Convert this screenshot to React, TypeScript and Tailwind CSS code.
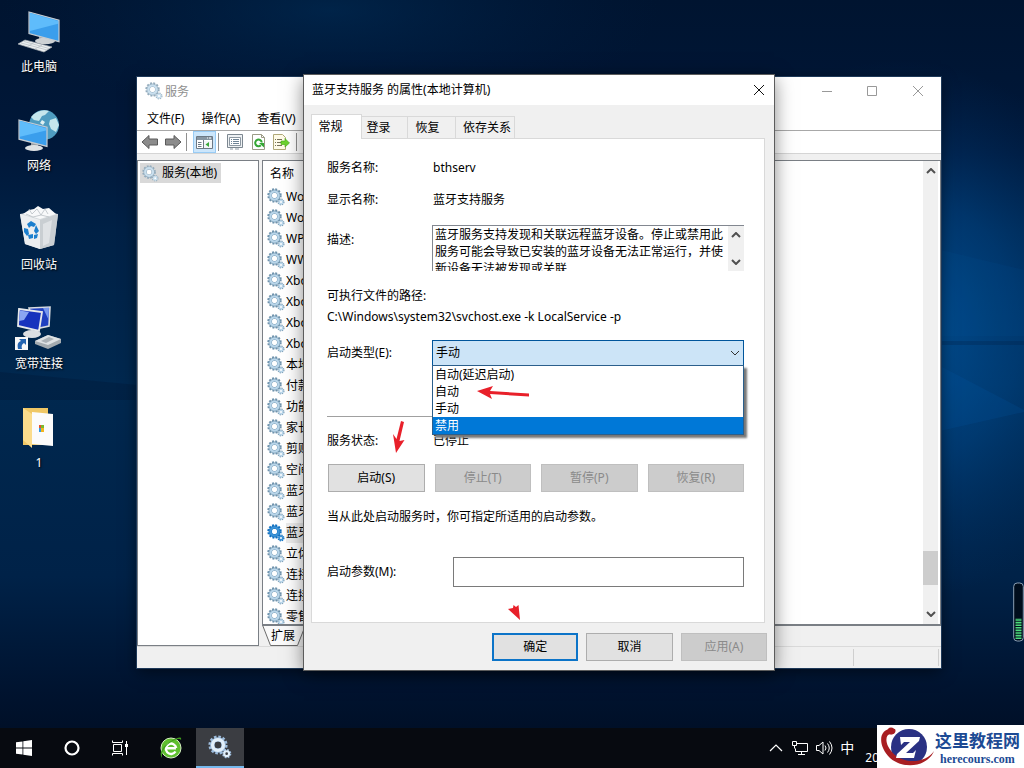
import type { ReactNode } from "react";

const services = [
    "Wo", "Wo", "WP", "WW", "Xbo", "Xbo", "Xbo", "Xbo", "本地", "付款", "功能",
    "家长", "剪贴", "空间", "蓝牙", "蓝牙", "蓝牙", "立体", "连接", "连接", "零售",
];
const selectedService = 16;

const startupTypes = ["自动(延迟启动)", "自动", "手动", "禁用"];

const description =
    "蓝牙服务支持发现和关联远程蓝牙设备。停止或禁用此服务可能会导致已安装的蓝牙设备无法正常运行，并使新设备无法被发现或关联";

function Gears({ size = 18, rim = "#6f93ad", body = "#b9d6ea", hole = "#ffffff" }) {
    return (
        <svg width={size} height={size} viewBox="0 0 18 18" className="shrink-0" aria-hidden="true">
            <circle cx="7.5" cy="7.5" r="6.2" fill="none" stroke={rim} strokeWidth="2" strokeDasharray="1.9 1.35" />
            <circle cx="7.5" cy="7.5" r="4.2" fill="none" stroke={rim} strokeWidth="3.4" />
            <circle cx="7.5" cy="7.5" r="4.1" fill="none" stroke={body} strokeWidth="2.4" />
            <circle cx="7.5" cy="7.5" r="2.4" fill={hole} />
            <circle cx="14" cy="14" r="2.8" fill="none" stroke={rim} strokeWidth="1.4" strokeDasharray="1.3 0.9" />
            <circle cx="14" cy="14" r="1.8" fill={hole} stroke={body} strokeWidth="1.6" />
        </svg>
    );
}

function Chevron({ up = false, color = "#505050", width = 2 }) {
    return (
        <svg width="10" height="6" viewBox="0 0 10 6" fill="none" stroke={color} strokeWidth={width} aria-hidden="true">
            <path d={up ? "M1 5 5 1l4 4" : "M1 1l4 4 4-4"} />
        </svg>
    );
}

function Wallpaper() {
    return (
        <svg className="absolute inset-0 h-full w-full" viewBox="0 0 1024 768" preserveAspectRatio="none" aria-hidden="true">
            <defs>
                <linearGradient id="sky" x1="0" y1="0" x2="0" y2="1">
                    <stop offset="0" stopColor="#001430" />
                    <stop offset="0.2" stopColor="#00183a" />
                    <stop offset="0.3" stopColor="#002146" />
                    <stop offset="0.5" stopColor="#00284f" />
                    <stop offset="0.75" stopColor="#002248" />
                    <stop offset="0.9" stopColor="#00132f" />
                    <stop offset="1" stopColor="#000c20" />
                </linearGradient>
                <radialGradient id="glow">
                    <stop offset="0" stopColor="#0060b0" stopOpacity="0.75" />
                    <stop offset="0.5" stopColor="#00509a" stopOpacity="0.45" />
                    <stop offset="1" stopColor="#003a78" stopOpacity="0" />
                </radialGradient>
                <radialGradient id="top">
                    <stop offset="0" stopColor="#003a6c" stopOpacity="0.4" />
                    <stop offset="1" stopColor="#00244c" stopOpacity="0" />
                </radialGradient>
            </defs>
            <rect width="1024" height="768" fill="url(#sky)" />
            <ellipse cx="330" cy="10" rx="330" ry="110" fill="url(#top)" />
            <ellipse cx="900" cy="330" rx="240" ry="270" fill="url(#glow)" />
            <path d="M900 240 1024 270V336H900z" fill="#0064b8" opacity="0.08" />
            <path d="M900 345 1024 410V412L900 440z" fill="#0064b8" opacity="0.14" />
            <path d="M900 341H1024V345H900z" fill="#001c40" opacity="0.25" />
            <path d="M0 372 137 385V400H0z" fill="#001a3a" opacity="0.4" />
        </svg>
    );
}

function Screen({ x, y, w, h }: { x: number; y: number; w: number; h: number }) {
    return (
        <g>
            <path d={`M${x} ${y}l${w} ${h * 0.3}v${h * 0.8}l${-w} ${-h * 0.3}z`} fill="#3a9eec" stroke="#c6cbd0" strokeWidth="1.2" />
            <path d={`M${x + 1} ${y + 1}l${w - 2} ${h * 0.3}v${h * 0.1}L${x + 1} ${y + h * 0.7}z`} fill="#5fbcfb" />
        </g>
    );
}

function PcIcon() {
    return (
        <svg width="48" height="48" viewBox="0 0 48 48" aria-hidden="true">
            <path d="M24 28h7v4h-7z" fill="#9aa0a5" />
            <ellipse cx="30" cy="33" rx="10" ry="3.200" fill="#cdd1d4" />
            <Screen x={14} y={4} w={30} h={27} />
            <path d="M3 36l7-4 27 7-8 5z" fill="#eceff1" stroke="#aab0b5" strokeWidth="0.7" />
            <path d="M6 35l26 7M9 33.500l25 7M12 39l7-4.500M20 41l7-4" stroke="#b5bbc0" strokeWidth="0.7" />
        </svg>
    );
}

function NetworkIcon() {
    return (
        <svg width="48" height="48" viewBox="0 0 48 48" aria-hidden="true">
            <circle cx="29" cy="18" r="15" fill="#4e9cc0" />
            <path d="M16 10c5-6 12-8 18-6l-4 4-3 1-3 5-5-1zM35 13l6-2 3 7-3 7-5-3-2-5z" fill="#c5e6ec" />
            <path d="M27 13l3 2-2 3-3-2z" fill="#e0f2f3" />
            <path d="M16 36h7v5h-7z" fill="#9aa0a5" />
            <ellipse cx="19" cy="41" rx="9" ry="3" fill="#dfe2e4" />
            <Screen x={4} y={13} w={28} h={24} />
        </svg>
    );
}

function BinIcon() {
    return (
        <svg width="48" height="48" viewBox="0 0 48 48" aria-hidden="true">
            <path d="M5 8l19-3 19 3-4 31-14 4-15-5z" fill="#d5dadd" />
            <path d="M5 8l20 6v29l-15-5z" fill="#eceef0" />
            <path d="M25 14l18-6-4 31-14 4z" fill="#c9ced2" />
            <path d="M8 8l6-4 5-1 4-3 5 3 6-1 7 6-16 5z" fill="#f8f9fa" />
            <path d="M14 3l3 5 5-5 4 6 4-6 3 5M11 8l7 3 8-2 8 2" fill="none" stroke="#b9bfc4" strokeWidth="0.8" />
            <path d="M28 18l9-4-3 23-6 3z" fill="#dfe2e5" />
            <path d="M12 18l4-3 5 3-2 3-3-1-2 2zM21 19l3 6-3 3-2-3zM9 22l4 1 1 5-2 2-3-4zM13 29l5-1v4l-4 1zM19 29l4-1-1 4-3 1z" fill="#1c7fce" />
        </svg>
    );
}

function BroadbandIcon() {
    return (
        <svg width="48" height="48" viewBox="0 0 48 48" aria-hidden="true">
            <path d="M14 3l21-1-1 19-14 3z" fill="#1f3fc0" stroke="#d9dcdf" strokeWidth="1.6" />
            <path d="M28 3l6-.5-.5 12z" fill="#7898ee" />
            <ellipse cx="17" cy="29" rx="9" ry="4" fill="#dcdfe2" />
            <path d="M4 4l23 3-3 19L3 21z" fill="#1732bd" stroke="#e6e8ea" strokeWidth="1.8" />
            <path d="M5 5.500l9 1.500-5 8-5 1z" fill="#8ba5f2" />
            <path d="M20 36l13-6 13 4v4l-13 6-13-5z" fill="#a4abb0" />
            <path d="M20 36l13-6 13 4-13 6z" fill="#dfe2e4" />
            <path d="M26 36l8-4 5 2-8 4z" fill="#abb1b6" />
            <rect x="0" y="32" width="13" height="13" fill="#f8f8f8" />
            <path d="M3 44c-1-5 0-7 3-8l-2-2h7v6l-2-2c-2 1-3 3-2 6z" fill="#2464b0" />
        </svg>
    );
}

function FolderIcon() {
    return (
        <svg width="48" height="48" viewBox="0 0 48 48" aria-hidden="true">
            <path d="M8 4h25v37H8z" fill="#efc765" />
            <path d="M17 8l21 2v32l-21-2z" fill="#fbfbfb" />
            <path d="M8 4l9 6v34l-9-8z" fill="#fbdc8c" />
            <path d="M24 21h2v3h-2z" fill="#e8502c" />
            <path d="M26 21h3v3h-3z" fill="#7ab82e" />
            <path d="M24 24h2v4h-2z" fill="#2e9be6" />
            <path d="M26 24h3v4h-3z" fill="#f3b51c" />
        </svg>
    );
}

const shortcuts = [
    { name: "此电脑", icon: <PcIcon /> },
    { name: "网络", icon: <NetworkIcon /> },
    { name: "回收站", icon: <BinIcon /> },
    { name: "宽带连接", icon: <BroadbandIcon /> },
    { name: "1", icon: <FolderIcon /> },
];

function Shortcuts() {
    return (
        <div className="relative flex w-[78px] flex-col gap-[30px] pt-2">
            {shortcuts.map((s) => (
                <button key={s.name} className="flex flex-col items-center gap-px text-xs leading-5 text-white [text-shadow:1px_1px_2px_#000]">
                    {s.icon}
                    <span>{s.name}</span>
                </button>
            ))}
        </div>
    );
}

function ToolArrow({ flip = false }) {
    return (
        <svg width="18" height="16" viewBox="0 0 18 16" aria-hidden="true">
            <path
                d={flip ? "M17 8 10 1.500V5H1.500v6H10v3.500z" : "M1 8l7-6.500V5h8.500v6H8v3.500z"}
                fill="#8c8c8c"
                stroke="#5a5a5a"
            />
        </svg>
    );
}

function Toolbar() {
    return (
        <div className="flex h-6 items-center border-t border-b border-t-[#a8a8a8] border-b-[#d5d5d5] bg-white pl-1">
            <button aria-label="后退"><ToolArrow /></button>
            <button aria-label="前进" className="ml-[5px]"><ToolArrow flip /></button>
            <span className="ml-1 h-[18px] w-px bg-[#8f8f8f]" />
            <button aria-label="显示控制台树" className="ml-[6px] flex h-[22px] w-[23px] items-center justify-center border border-[#99ccf5] bg-[#cce6fb]">
                <svg width="17" height="15" viewBox="0 0 17 15" aria-hidden="true">
                    <path d="M.5 1.500h16v12H.5z" fill="#fff" stroke="#6c7884" />
                    <path d="M1 2h15v3H1z" fill="#8796a3" />
                    <path d="M11 3h1m1 0h2" stroke="#fff" />
                    <path d="M7.500 5v8.500M2 7.500h3.500M2 9.500h3.500M2 11.500h3.500" stroke="#6c7884" />
                    <path d="M8 6h8v7H8z" fill="#f2f5f7" />
                    <path d="M13 7v5L9.500 9.500z" fill="#3aa83a" />
                </svg>
            </button>
            <span className="ml-[2px] h-[18px] w-px bg-[#8f8f8f]" />
            <button aria-label="属性" className="ml-2">
                <svg width="16" height="16" viewBox="0 0 16 16" fill="none" aria-hidden="true">
                    <path d="M.5.5h15v13H.5z" fill="#eef1f3" stroke="#7c8790" />
                    <path d="M2.500 3.500h11v8h-11z" fill="#fff" stroke="#8d98a1" />
                    <path d="M4 5.500h1m1 0h6M4 7.500h1m1 0h6M4 9.500h1m1 0h6" stroke="#6f8496" />
                    <path d="M3 15h3m2 0h4" stroke="#8d98a1" />
                </svg>
            </button>
            <button aria-label="刷新" className="ml-2">
                <svg width="15" height="16" viewBox="0 0 15 16" fill="none" aria-hidden="true">
                    <path d="M1.500.5h9l3 3v12h-12z" fill="#fff" stroke="#9b9b86" />
                    <path d="M10.500.5v3h3" stroke="#9b9b86" />
                    <path d="M10.800 8.500a3.300 3.300 0 1 0-1 2.800" stroke="#35a735" strokeWidth="2" />
                    <path d="M8 9h5v4.500z" fill="#35a735" />
                </svg>
            </button>
            <button aria-label="导出列表" className="ml-[7px]">
                <svg width="17" height="16" viewBox="0 0 17 16" fill="none" aria-hidden="true">
                    <path d="M.5.5h9l3 3v12H.5z" fill="#fffbe8" stroke="#b0a878" />
                    <path d="M2 5.500h1m1 0h5M2 8.500h1m1 0h5M2 11.500h1m1 0h5" stroke="#77715a" />
                    <path d="M8 7h4V4.500L16.500 9 12 13v-2.500H8z" fill="#6cd32f" stroke="#43a516" strokeWidth=".6" />
                </svg>
            </button>
            <span className="ml-[6px] h-[18px] w-px bg-[#8f8f8f]" />
        </div>
    );
}

function ServicesWindow() {
    return (
        <section className="absolute top-[77px] left-[137px] w-[804px] bg-[#f0f0f0] shadow-[0_0_0_1px_#1d3858,0_4px_14px_rgba(0,0,0,0.5)]">
            <header className="flex h-7 items-center bg-white pl-2 text-[#8f8f8f]">
                <Gears rim="#94acbd" body="#c9dfee" />
                <h2 className="ml-[2px] flex-1 pt-[2px]">服务</h2>
                <div className="flex text-[#999]">
                    <button aria-label="最小化" className="flex w-[45px] justify-center">
                        <svg width="12" height="12" viewBox="0 0 12 12" stroke="currentColor"><path d="M1 6.500h10" /></svg>
                    </button>
                    <button aria-label="最大化" className="flex w-[45px] justify-center">
                        <svg width="12" height="12" viewBox="0 0 12 12" fill="none" stroke="currentColor"><path d="M1.500 1.500h9v9h-9z" /></svg>
                    </button>
                    <button aria-label="关闭" className="flex w-[47px] justify-center">
                        <svg width="12" height="12" viewBox="0 0 12 12" stroke="currentColor"><path d="M1 1l10 10M11 1 1 11" /></svg>
                    </button>
                </div>
            </header>
            <nav className="flex h-[25px] items-center gap-[17px] bg-white pt-[2px] pl-[10px]">
                <button>文件(F)</button>
                <button>操作(A)</button>
                <button>查看(V)</button>
            </nav>
            <Toolbar />
            <div className="flex gap-[3px] pt-[6px]">
                <div className="w-[122px] border border-[#7a7f85] bg-white pt-[2px] pl-[2px]">
                    <button className="flex h-5 items-center gap-[3px] bg-[#d9d9d9] pr-1 pl-[2px]">
                        <Gears size={17} rim="#94acbd" body="#c9dfee" />
                        服务(本地)
                    </button>
                </div>
                <div className="min-w-0 flex-1">
                    <div className="flex h-[466px] overflow-hidden border border-b-2 border-[#7a7f85] bg-white">
                        <div className="flex-1 overflow-hidden">
                            <table className="w-[280px] text-left">
                                <thead>
                                    <tr className="h-[25px]">
                                        <th className="pl-[7px] font-normal">名称</th>
                                    </tr>
                                </thead>
                                <tbody>
                                    {services.map((name, i) => (
                                        <tr key={i} className="h-[21px]">
                                            <td className="p-0">
                                                <div className="flex items-center gap-px pl-1">
                                                    {i === selectedService ? (
                                                        <Gears rim="#0f6fc0" body="#3d93d6" />
                                                    ) : (
                                                        <Gears />
                                                    )}
                                                    <span className={i === selectedService ? "flex-1 bg-[#ececec] leading-5" : "leading-5"}>{name}</span>
                                                </div>
                                            </td>
                                        </tr>
                                    ))}
                                </tbody>
                            </table>
                        </div>
                        <div className="mr-[2px] flex w-[15px] flex-col items-center justify-between bg-[#f0f0f0] py-[7px]">
                            <Chevron up />
                            <div className="mt-auto mb-[26px] h-[34px] w-full bg-[#cdcdcd]" />
                            <Chevron />
                        </div>
                    </div>
                    <button className="relative flex h-5 w-[46px] items-center pl-[9px]">
                        <svg className="absolute inset-0" width="46" height="20" viewBox="0 0 46 20" fill="#fafafa" stroke="#6b6b6b" aria-hidden="true">
                            <path d="M.5-1l8 20.500h27L42 3V-1z" />
                        </svg>
                        <span className="relative">扩展</span>
                    </button>
                </div>
            </div>
            <footer className="flex h-[22px] justify-end border-t border-[#dadada]">
                <span className="my-[2px] w-[86px] border-x border-[#cfcfcf]" />
                <span className="w-[2px]" />
            </footer>
        </section>
    );
}

function DialogButton({ children, disabled = false, primary = false }: { children: ReactNode; disabled?: boolean; primary?: boolean }) {
    const look = disabled
        ? "border border-[#bfbfbf] bg-[#cccccc] text-[#8a8a8a]"
        : primary
          ? "border-2 border-[#0c74c8] bg-[#e1e1e1]"
          : "border border-[#adadad] bg-[#e1e1e1]";
    return (
        <button disabled={disabled} className={`h-7 w-full ${look}`}>
            {children}
        </button>
    );
}

function RedArrows() {
    return (
        <svg className="pointer-events-none absolute top-0 left-0" width="470" height="595" viewBox="304 75 470 595" fill="#e8202a" aria-hidden="true">
            <path d="M477 391l16-5-3 5 39 2.500v3L490 394l2 5z" />
            <path d="M401 421l3 1-4.500 19 5-1L396 453l-3-19 3.500 5z" />
            <path d="M508 609l5-1 .5-3 2.500 2 2.500-2 1.500 15z" />
        </svg>
    );
}

function PropertiesDialog() {
    const rowLabel = "w-[106px] shrink-0";
    const sideTab = "h-[22px] border border-l-0 border-b-0 border-[#d9d9d9] bg-[#f0f0f0]";
    return (
        <section
            role="dialog"
            aria-label="蓝牙支持服务 的属性(本地计算机)"
            className="absolute top-[75px] left-[304px] w-[470px] bg-[#f0f0f0] pb-[9px] shadow-[0_0_0_1px_#5c5c5c,0_4px_18px_rgba(0,0,0,0.5)]"
        >
            <header className="flex h-[30px] items-center justify-between bg-white pr-[9px] pl-2">
                <h2>蓝牙支持服务 的属性(本地计算机)</h2>
                <button aria-label="关闭">
                    <svg width="12" height="12" viewBox="0 0 12 12" stroke="#111"><path d="M1 1l10 10M11 1 1 11" /></svg>
                </button>
            </header>

            <div className="flex items-end pt-[9px] pl-[7px]" role="tablist">
                <button role="tab" aria-selected="true" className="relative -mb-px h-[25px] w-[51px] border border-b-0 border-[#d9d9d9] bg-white pr-3">常规</button>
                <button role="tab" className={`${sideTab} w-[46px] pr-3`}>登录</button>
                <button role="tab" className={`${sideTab} w-12 pr-2`}>恢复</button>
                <button role="tab" className={`${sideTab} w-[59px] pl-1`}>依存关系</button>
            </div>

            <div className="mr-[9px] ml-[7px] border border-[#d9d9d9] bg-white pt-[13px] pr-5 pb-[35px] pl-[15px]">
                <div className="flex h-8 items-center">
                    <span className={rowLabel}>服务名称:</span>
                    <span>bthserv</span>
                </div>
                <div className="flex h-8 items-center">
                    <span className={rowLabel}>显示名称:</span>
                    <span>蓝牙支持服务</span>
                </div>
                <div className="mt-[9px] flex">
                    <label htmlFor="desc" className="w-[105px] shrink-0 leading-[30px]">描述:</label>
                    <div className="flex h-[46px] min-w-0 flex-1 border-t border-l border-[#828790]">
                        <textarea id="desc" readOnly value={description} className="min-w-0 flex-1 resize-none overflow-hidden pl-[2px] leading-[17px] outline-none" />
                        <div className="flex w-4 flex-col items-center justify-between bg-[#f0f0f0] py-[6px]">
                            <Chevron up />
                            <Chevron />
                        </div>
                    </div>
                </div>

                <p className="mt-[15px] leading-5">可执行文件的路径:</p>
                <p className="leading-[22px]">C:\Windows\system32\svchost.exe -k LocalService -p</p>

                <div className="mt-3 flex items-center">
                    <label htmlFor="type" className="w-[105px] shrink-0">启动类型(E):</label>
                    <div className="relative min-w-0 flex-1">
                        <select id="type" defaultValue="手动" className="block h-[26px] w-full appearance-none border border-[#00559b] bg-[#cce4f7] pl-[3px] outline-none">
                            <option>手动</option>
                        </select>
                        <span className="pointer-events-none absolute top-[10px] right-1">
                            <Chevron width={1} color="#333" />
                        </span>
                        <ul role="listbox" className="absolute top-[25px] left-0 w-full border border-[#2b5f8c] bg-white shadow-[3px_3px_2px_#777]">
                            {startupTypes.map((t) => (
                                <li key={t} role="option" aria-selected={t === "禁用"} className={t === "禁用" ? "bg-[#0078d7] pl-[2px] leading-[17px] text-white" : "pl-[2px] leading-[17px]"}>
                                    {t}
                                </li>
                            ))}
                        </ul>
                    </div>
                </div>

                <hr className="mt-[50px] border-[#a0a0a0]" />

                <div className="mt-[14px] flex h-5 items-center">
                    <span className={rowLabel}>服务状态:</span>
                    <span>已停止</span>
                </div>

                <div className="mt-[13px] ml-px grid grid-cols-4 gap-[10px]">
                    <DialogButton>启动(S)</DialogButton>
                    <DialogButton disabled>停止(T)</DialogButton>
                    <DialogButton disabled>暂停(P)</DialogButton>
                    <DialogButton disabled>恢复(R)</DialogButton>
                </div>

                <p className="mt-[15px] leading-5">当从此处启动服务时，你可指定所适用的启动参数。</p>

                <div className="mt-[30px] flex items-center">
                    <label htmlFor="args" className="w-[126px] shrink-0">启动参数(M):</label>
                    <input id="args" type="text" className="h-[30px] min-w-0 flex-1 border border-[#7a7a7a] bg-white px-1 outline-none" />
                </div>
            </div>

            <footer className="mt-[10px] mr-[7px] ml-auto grid w-[275px] grid-cols-3 gap-2">
                <DialogButton primary>确定</DialogButton>
                <DialogButton>取消</DialogButton>
                <DialogButton disabled>应用(A)</DialogButton>
            </footer>
            <RedArrows />
        </section>
    );
}

function Meter() {
    return (
        <svg className="absolute right-0 bottom-[86px]" width="11" height="60" viewBox="0 0 11 60" aria-hidden="true">
            <rect x=".7" y="1" width="9.600" height="58" rx="3.500" fill="#000d1c" stroke="#8ba0b4" />
            <path d="M5.500 57V36" stroke="#4ddb7c" strokeWidth="6" strokeDasharray="1.600 1" />
        </svg>
    );
}

function Taskbar() {
    return (
        <footer className="relative flex h-10 items-center bg-[#070a10] text-white">
            <button aria-label="开始" className="flex w-12 justify-center">
                <svg width="16" height="16" viewBox="0 0 16 16" fill="#fff"><path d="M0 2.300 6.500 1.400v6.200H0zM7.300 1.300 16 0v7.600H7.300zM0 8.400h6.500v6.200L0 13.700zM7.300 8.400H16V16l-8.700-1.300z" /></svg>
            </button>
            <button aria-label="搜索" className="flex w-12 justify-center">
                <svg width="16" height="16" viewBox="0 0 16 16" fill="none" stroke="#fff" strokeWidth="2.200"><circle cx="8" cy="8" r="6.500" /></svg>
            </button>
            <button aria-label="任务视图" className="flex w-12 justify-center">
                <svg width="18" height="16" viewBox="0 0 18 16" fill="none" stroke="#fff">
                    <path d="M1.500.5v2h10v-2M2.500 4.500h8v7h-8zM1.500 15.500v-2h10v2M15.500 1v14" />
                    <path d="M14 4h3v3h-3z" fill="#fff" stroke="none" />
                </svg>
            </button>
            <button aria-label="浏览器" className="ml-[2px] flex w-[50px] justify-center">
                <svg width="24" height="24" viewBox="0 0 24 24" fill="none">
                    <circle cx="12" cy="12" r="10" fill="#5fbf2e" stroke="#d6f0c2" />
                    <path d="M7 12.200h10M16.500 15.500A5.200 5.200 0 1 1 17.200 12" stroke="#fff" strokeWidth="2.400" />
                    <path d="M3 22c-4-5 2-13 9-17s11-5 10-1c-1-2-5-1-10 2S2 16 3 22z" fill="#3f9d1d" />
                </svg>
            </button>
            <button aria-label="服务" className="flex h-10 w-12 items-center justify-center border-b-2 border-[#76b9ed] bg-[#3b3d42]">
                <Gears size={24} rim="#9dbcdc" body="#e2effa" hole="#3b3d42" />
            </button>
            <div className="mr-[145px] ml-auto flex items-center">
                <svg width="14" height="8" viewBox="0 0 14 8" fill="none" stroke="#fff" strokeWidth="1.200"><path d="M1 7l6-6 6 6" /></svg>
                <svg className="ml-2" width="18" height="16" viewBox="0 0 18 16" fill="none" stroke="#fff">
                    <path d="M5.500 3.500h11v8H4.500v-3M10.500 11.500v3M7 14.500h7M1.500 1.500h4v4h-4zM3.500 5.500v3" />
                </svg>
                <svg className="ml-[6px]" width="18" height="16" viewBox="0 0 18 16" fill="none" stroke="#fff">
                    <path d="M1.500 5.500h2.500l4-3.500v12l-4-3.500H1.500zM10 5.500q2 2.500 0 5M12.500 3.500q3.500 4.500 0 9M14.500 1.500q5 6.500 0 13" />
                </svg>
                <span className="ml-[7px] text-sm">中</span>
                <span className="ml-[11px] self-end pt-5 text-xs leading-4">20</span>
            </div>
        </footer>
    );
}

function SiteBadge() {
    return (
        <a href="#" className="absolute right-0 bottom-0 flex h-[43px] w-[147px] items-center bg-white text-[#1c4a94]">
            <svg width="58" height="43" viewBox="0 0 58 43" className="shrink-0" aria-hidden="true">
                <circle cx="32" cy="22" r="18" fill="#2a3183" />
                <path d="M18 4C1 2 0 20 13 33c12 11 37 10 44-7-7 11-27 14-39 4C7 20 8 10 13 9c3 1 7-1 5-5z" fill="#a81e22" />
                <circle cx="14" cy="6" r="3.500" fill="#a81e22" />
                <path d="M23 12h20l-1 4-13 12h7l3-3-2 8H19l1-4 13-12h-6l-3 3z" fill="#fff" />
            </svg>
            <span className="flex flex-1 flex-col items-center pr-1 whitespace-nowrap">
                <span className="text-[17px] leading-6 font-bold">这里教程网</span>
                <span className="font-['Liberation_Serif',serif] text-xs leading-3 font-bold">herecours.com</span>
            </span>
        </a>
    );
}

export default function App() {
    return (
        <main className="relative flex min-h-screen flex-col overflow-hidden bg-[#001430] font-['Noto_Sans','Noto_Sans_CJK_SC',sans-serif] text-xs text-black">
            <Wallpaper />
            <div className="relative flex-1">
                <Shortcuts />
                <ServicesWindow />
                <PropertiesDialog />
            </div>
            <Taskbar />
            <div className="pointer-events-none absolute inset-x-0 bottom-10">
                <Meter />
            </div>
            <SiteBadge />
        </main>
    );
}
